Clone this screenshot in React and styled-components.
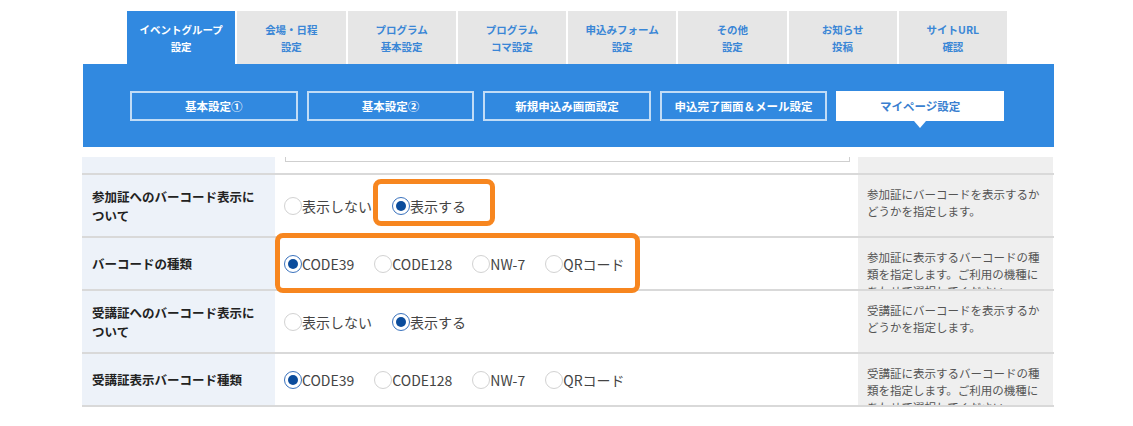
import React from 'react';
import styled, { createGlobalStyle } from 'styled-components';

const GlobalStyle = createGlobalStyle`
  body {
    margin: 0;
    background: #fff;
    font-family: "Noto Sans CJK JP", "Noto Sans", sans-serif;
  }
`;

const Page = styled.div`
  width: 971px;
  margin-left: 83px;
  padding-top: 11px;
`;

const TabRow = styled.div`
  display: flex;
  gap: 2px;
  width: 880px;
  margin-left: 44px;
`;

const Tab = styled.div`
  flex: 1;
  height: 53px;
  display: flex;
  align-items: center;
  justify-content: center;
  text-align: center;
  font-size: 10.5px;
  font-weight: 700;
  line-height: 17px;
  background: ${(p) => (p.$active ? '#3189e0' : '#e6e6e6')};
  color: ${(p) => (p.$active ? '#fff' : '#3a86d6')};
`;

const Panel = styled.div`
  background: #3189e0;
  height: 83px;
  padding: 27px 50px 0 47px;
  box-sizing: border-box;
  display: flex;
  gap: 9px;
  align-items: flex-start;
`;

const SubButton = styled.div`
  position: relative;
  flex: 1;
  height: 30px;
  box-sizing: border-box;
  border: 2px solid ${(p) => (p.$active ? '#fff' : 'rgba(255,255,255,0.7)')};
  background: ${(p) => (p.$active ? '#fff' : 'transparent')};
  color: ${(p) => (p.$active ? '#3a7fd0' : '#fff')};
  font-size: 11.5px;
  font-weight: 700;
  display: flex;
  align-items: center;
  justify-content: center;

  ${(p) =>
    p.$active &&
    `
    &::after {
      content: '';
      position: absolute;
      left: 50%;
      bottom: -9px;
      transform: translateX(-50%);
      border-left: 6px solid transparent;
      border-right: 6px solid transparent;
      border-top: 7px solid #fff;
    }
  `}
`;

const Table = styled.div`
  position: relative;
  margin-top: 10px;
  margin-left: -1px;
`;

const Row = styled.div`
  display: grid;
  grid-template-columns: 193px 583px 195px;
  height: ${(p) => p.$h}px;
  box-sizing: border-box;
  border-bottom: 2px solid #d9d9d9;
`;

const LabelCell = styled.div`
  background: #edf2f9;
  padding: 0 18px 0 10px;
  display: flex;
  align-items: center;
  font-size: 12.5px;
  font-weight: 700;
  line-height: 19px;
  color: #222;
`;

const ContentCell = styled.div`
  background: #fff;
  padding-left: 9px;
  display: flex;
  align-items: center;
  gap: 20px;
`;

const DescCell = styled.div`
  background: #efefef;
  padding: 11px 10px 0 9px;
  font-size: 11.5px;
  line-height: 17px;
  color: #555;
  overflow: hidden;
`;

const TextareaStub = styled.div`
  align-self: flex-start;
  width: 563px;
  height: 4px;
  border: 1px solid #cfcfcf;
  border-top: none;
  margin-left: 1px;
`;

const Option = styled.label`
  display: flex;
  align-items: center;
  font-size: 14px;
  color: #444;
  white-space: nowrap;
`;

const RadioCircle = styled.span`
  width: 18px;
  height: 18px;
  box-sizing: border-box;
  border-radius: 50%;
  border: 1.5px solid ${(p) => (p.$checked ? '#3a72bd' : '#d2d2d2')};
  background: #fff;
  display: flex;
  align-items: center;
  justify-content: center;

  &::after {
    content: '';
    width: 10px;
    height: 10px;
    border-radius: 50%;
    background: ${(p) => (p.$checked ? '#0b4c9c' : 'transparent')};
  }
`;

const Highlight = styled.div`
  position: absolute;
  left: ${(p) => p.$x}px;
  top: ${(p) => p.$y}px;
  width: ${(p) => p.$w}px;
  height: ${(p) => p.$h}px;
  box-sizing: border-box;
  border: 5px solid #f7861f;
  border-radius: 8px;
  pointer-events: none;
`;

const tabs = [
  ['イベントグループ', '設定'],
  ['会場・日程', '設定'],
  ['プログラム', '基本設定'],
  ['プログラム', 'コマ設定'],
  ['申込みフォーム', '設定'],
  ['その他', '設定'],
  ['お知らせ', '投稿'],
  ['サイトURL', '確認'],
];

const subs = ['基本設定①', '基本設定②', '新規申込み画面設定', '申込完了画面＆メール設定', 'マイページ設定'];

const codes = ['CODE39', 'CODE128', 'NW-7', 'QRコード'];

const rows = [
  {
    label: '参加証へのバーコード表示について',
    options: ['表示しない', '表示する'],
    checked: 1,
    desc: '参加証にバーコードを表示するかどうかを指定します。',
    h: 63,
  },
  {
    label: 'バーコードの種類',
    options: codes,
    checked: 0,
    desc: '参加証に表示するバーコードの種類を指定します。ご利用の機種にあわせて選択してください。',
    h: 53,
  },
  {
    label: '受講証へのバーコード表示について',
    options: ['表示しない', '表示する'],
    checked: 1,
    desc: '受講証にバーコードを表示するかどうかを指定します。',
    h: 63,
  },
  {
    label: '受講証表示バーコード種類',
    options: codes,
    checked: 0,
    desc: '受講証に表示するバーコードの種類を指定します。ご利用の機種にあわせて選択してください。',
    h: 53,
  },
];

const Radio = ({ text, checked }) => (
  <Option>
    <RadioCircle $checked={checked} />
    {text}
  </Option>
);

const App = () => {
  return (
    <Page>
      <GlobalStyle />
      <TabRow>
        {tabs.map((t, i) => (
          <Tab key={i} $active={i === 0}>
            {t[0]}
            <br />
            {t[1]}
          </Tab>
        ))}
      </TabRow>
      <Panel>
        {subs.map((s, i) => (
          <SubButton key={i} $active={i === subs.length - 1}>
            {s}
          </SubButton>
        ))}
      </Panel>
      <Table>
        <Row $h={18}>
          <LabelCell />
          <ContentCell>
            <TextareaStub />
          </ContentCell>
          <DescCell />
        </Row>
        {rows.map((r, i) => (
          <Row key={i} $h={r.h}>
            <LabelCell>{r.label}</LabelCell>
            <ContentCell>
              {r.options.map((o, j) => (
                <Radio key={j} text={o} checked={j === r.checked} />
              ))}
            </ContentCell>
            <DescCell>{r.desc}</DescCell>
          </Row>
        ))}
        <Highlight $x={291} $y={22} $w={122} $h={47} />
        <Highlight $x={193} $y={76} $w={365} $h={60} />
      </Table>
    </Page>
  );
};

export default App;
